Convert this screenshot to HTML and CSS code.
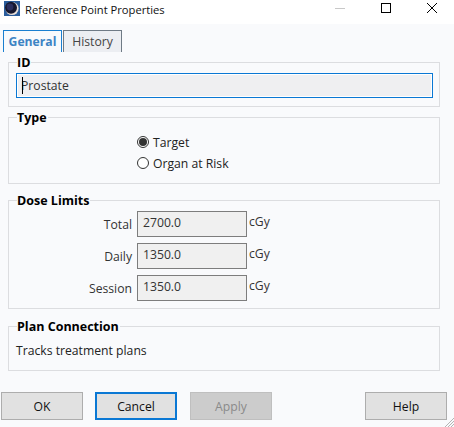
FILE: index.html
```html
<!DOCTYPE html>
<html lang="en">
<head>
<meta charset="utf-8">
<title>Reference Point Properties</title>
<link rel="stylesheet" href="styles.css">
</head>
<body>
<div class="dialog">
  <header class="titlebar">
    <svg class="app-icon" width="16" height="15" viewBox="0 0 16 15">
      <rect width="16" height="15" fill="#2a5d9c"/>
      <circle cx="8" cy="7.5" r="6.6" fill="#e9dfd8"/>
      <circle cx="7" cy="6.8" r="6" fill="#15172e"/>
      <circle cx="6" cy="6" r="3.4" fill="#2b2f5e"/>
    </svg>
    <span class="title">Reference Point Properties</span>
    <div class="win-controls">
      <svg class="win-btn" width="12" height="12" viewBox="0 0 12 12"><path d="M1 6.5h10" stroke="#c8c8c8" stroke-width="1"/></svg>
      <svg class="win-btn" width="12" height="12" viewBox="0 0 12 12"><rect x="1.5" y="1.5" width="9" height="9" fill="none" stroke="#000"/></svg>
      <svg class="win-btn" width="12" height="12" viewBox="0 0 12 12"><path d="M1 1l10 10M11 1L1 11" stroke="#000" stroke-width="1"/></svg>
    </div>
  </header>
  <main class="content">
    <nav class="tabs">
      <span class="tab tab-active">General</span>
      <span class="tab">History</span>
    </nav>
    <section class="group group-id">
      <h2 class="legend">ID</h2>
      <div class="id-input"><span class="caret"></span>Prostate</div>
    </section>
    <section class="group group-type">
      <h2 class="legend">Type</h2>
      <div class="radios">
        <div class="radio-row"><span class="radio radio-on"></span>Target</div>
        <div class="radio-row"><span class="radio"></span>Organ at Risk</div>
      </div>
    </section>
    <section class="group group-dose">
      <h2 class="legend">Dose Limits</h2>
      <div class="dose-grid">
        <span class="dose-label">Total</span><span class="dose-value">2700.0</span><span class="dose-unit">cGy</span>
        <span class="dose-label">Daily</span><span class="dose-value">1350.0</span><span class="dose-unit">cGy</span>
        <span class="dose-label">Session</span><span class="dose-value">1350.0</span><span class="dose-unit">cGy</span>
      </div>
    </section>
    <section class="group group-plan">
      <h2 class="legend">Plan Connection</h2>
      <p class="plan-text">Tracks treatment plans</p>
    </section>
    <footer class="buttons">
      <span class="btn">OK</span>
      <span class="btn btn-default">Cancel</span>
      <span class="btn btn-disabled">Apply</span>
      <span class="btn btn-help">Help</span>
    </footer>
    <svg class="grip" width="10" height="10" viewBox="0 0 10 10"><path d="M10 1L1 10M10 4L4 10M10 7L7 10" stroke="#b4b4b4" stroke-width="1"/></svg>
  </main>
</div>
</body>
</html>
```

FILE: styles.css
```css
* { box-sizing: border-box; }
html, body { margin: 0; padding: 0; }
body {
  width: 454px;
  height: 427px;
  overflow: hidden;
  font-family: "Open Sans", "Noto Sans", "Liberation Sans", sans-serif;
  font-size: 12.2px;
  color: #1a1a1a;
}
.dialog { display: flex; flex-direction: column; height: 427px; }
.titlebar {
  height: 24px;
  background: #fff;
  display: flex;
  align-items: center;
  padding-left: 4px;
  flex: none;
}
.app-icon { margin-top: -7px; }
.title { margin-left: 5px; font-size: 11.2px; color: #111; margin-top: -6px; }
.win-controls { margin-left: auto; display: flex; margin-top: -8px; padding-right: 16px; gap: 34px; }
.win-btn { display: block; }
.content {
  position: relative;
  flex: 1;
  background: #f9fafc;
  padding: 6px 14px 0 8px;
}
.tabs { display: flex; margin-left: -5px; gap: 1px; height: 22px; }
.tab {
  width: 59px;
  border: 1px solid #6f7a85;
  border-bottom: none;
  background: #eceef2;
  color: #444;
  text-align: center;
  line-height: 21px;
}
.tab-active {
  border-color: #1a7fd0;
  background: #f9fafc;
  color: #3d84c4;
  font-weight: 700;
}
.group {
  position: relative;
  border: 1px solid #dcdde0;
}
.group-id { margin-top: 10px; height: 45px; padding: 10px 6px 0 7px; }
.group-type { margin-top: 10px; height: 67px; padding-top: 16px; }
.group-dose { margin-top: 16px; height: 109px; padding-top: 10px; }
.group-plan { margin-top: 17px; height: 45px; padding: 16px 0 0 7px; }
.legend {
  position: absolute;
  left: 8px;
  top: -7px;
  margin: 0;
  padding: 0 1px 0 0;
  background: #f9fafc;
  font-size: 12.5px;
  line-height: 14px;
  font-weight: 700;
  color: #000;
}
.id-input {
  position: relative;
  height: 25px;
  border: 1px solid #0a78d4;
  box-shadow: inset 0 0 0 1px #fff;
  background: #efeff1;
  line-height: 23px;
  padding-left: 4px;
  color: #333;
}
.caret {
  position: absolute;
  left: 5px;
  top: 3px;
  width: 1px;
  height: 17px;
  background: #000;
}
.radios { padding-left: 128px; display: flex; flex-direction: column; gap: 5px; }
.radio-row { display: flex; align-items: center; gap: 4px; height: 16px; color: #222; }
.radio {
  width: 12px;
  height: 12px;
  border: 1px solid #333;
  border-radius: 50%;
  background: #fff;
  display: flex;
  align-items: center;
  justify-content: center;
}
.radio-on::after {
  content: "";
  width: 8px;
  height: 8px;
  border-radius: 50%;
  background: #333;
}
.dose-grid {
  display: grid;
  grid-template-columns: 123px 110px auto;
  column-gap: 5px;
  row-gap: 6px;
  grid-auto-rows: 26px;
}
.dose-label { text-align: right; line-height: 26px; margin-top: 1px; color: #333; }
.dose-value {
  border: 1px solid #7d7d7d;
  background: #f0f0f0;
  line-height: 22px;
  padding-left: 5px;
  color: #333;
}
.dose-unit { margin-left: -3px; line-height: 22px; color: #333; }
.plan-text { margin: 0; line-height: 16px; color: #222; }
.buttons { display: flex; margin: 21px 0 0 -7px; }
.btn {
  flex: none;
  width: 82px;
  height: 28px;
  border: 1px solid #adadad;
  background: #e1e1e1;
  text-align: center;
  line-height: 27px;
  color: #111;
}
.btn-default { margin-left: 12px; border: 2px solid #0a78d4; line-height: 25px; }
.btn-disabled { margin-left: 13px; background: #cccccc; border-color: #bfbfbf; color: #8a8a8a; }
.btn-help { margin-left: 93px; }
.grip { position: absolute; right: 0; bottom: 0; }
```
